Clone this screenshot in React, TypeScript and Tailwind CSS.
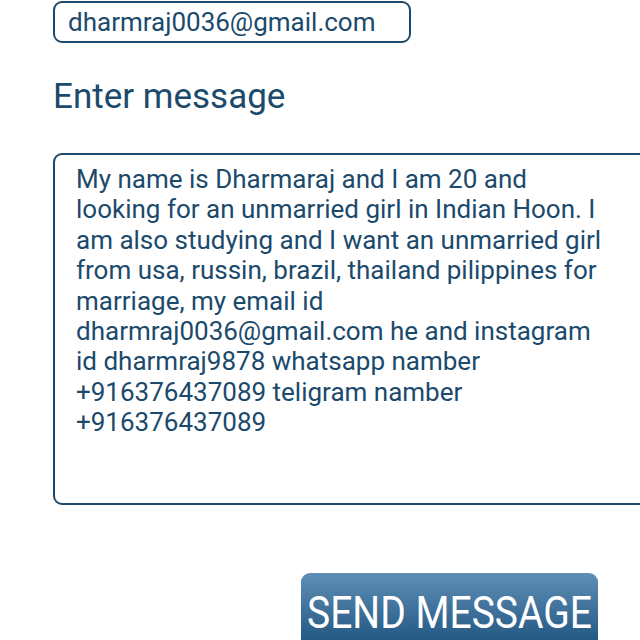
export default function App() {
  const message =
    'My name is Dharmaraj and I am 20 and looking for an unmarried girl in Indian Hoon. I am also studying and I want an unmarried girl from usa, russin, brazil, thailand pilippines for marriage, my email id dharmraj0036@gmail.com he and instagram id dharmraj9878 whatsapp namber +916376437089 teligram namber +916376437089'

  return (
    <div className="w-[640px] h-[640px] overflow-hidden bg-white font-['Roboto',sans-serif] text-[#1b4a6c]">
      <div className="pl-[53px] pt-px">
        <div className="w-[358px] h-[42px] border-2 border-[#1b4a6c] rounded-[9px] pl-[13px] flex items-center text-[26px] leading-none">
          dharmraj0036@gmail.com
        </div>
        <h2 className="mt-[34px] text-[35px] leading-[40px]">Enter message</h2>
        <div className="mt-[36px] w-[600px] h-[352px] border-2 border-[#1b4a6c] rounded-[9px] pl-[21px] pr-[35px] pt-[9px] text-[26px] leading-[30.4px]">
          {message}
        </div>
        <div className="mt-[68px] ml-[248px] w-[297px] h-[80px] rounded-t-[9px] bg-gradient-to-b from-[#5f8fb5] to-[#164f7c] text-white pt-[19px] pl-[6px] whitespace-nowrap">
          <div className="text-[39px] leading-none scale-y-[1.12] origin-top">SEND MESSAGE</div>
        </div>
      </div>
    </div>
  )
}
